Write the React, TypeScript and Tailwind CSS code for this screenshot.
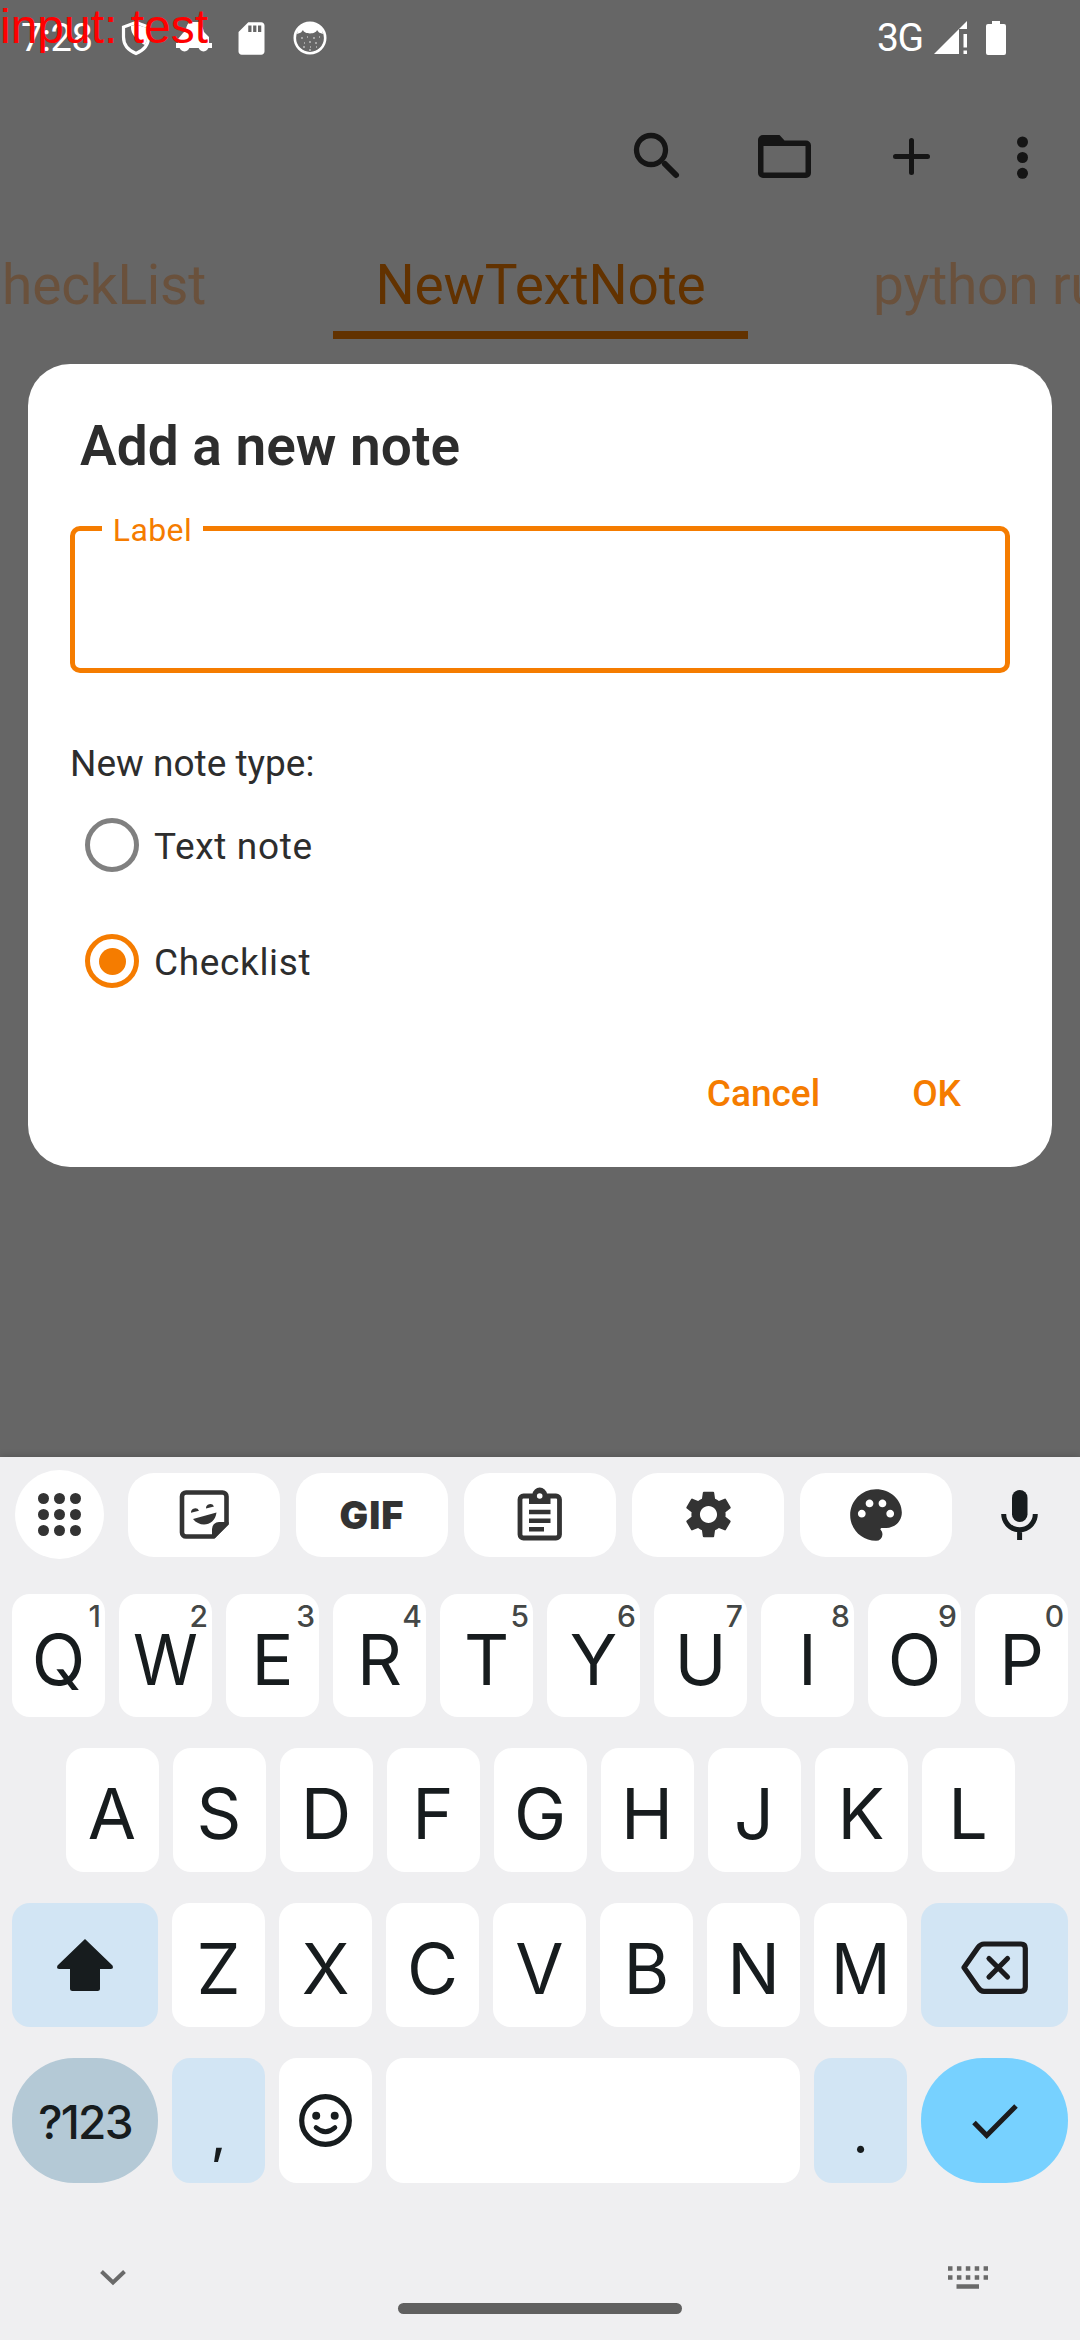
import React from "react";
import { MdPalette, MdSdCard, MdSettings } from "react-icons/md";

const INK = "#171c1e";
const DARK = "#333333";

type ArtProps = { box: [number, number, number, number]; children: React.ReactNode; className?: string };

function Art({ box, children, className }: ArtProps) {
  return (
    <svg width={box[2]} height={box[3]} viewBox={box.join(" ")} fill="none" className={className ?? "shrink-0"}>
      {children}
    </svg>
  );
}

function StatusBar() {
  return (
    <div className="flex h-[76px] shrink-0 items-center pl-[21px] text-white">
      <span className="w-[99px] text-[38px] leading-[76px] tracking-[-0.5px]">7:28</span>
      <Art box={[120, 20, 34, 38]}>
        <path d="M136 23.500L148.500 28V38C148.500 45.500 143.500 51.500 136 54.500C128.500 51.500 123.500 45.500 123.500 38V28Z" stroke="white" strokeWidth="3.200" />
        <path d="M131 27L136 25.500L147 29V38C147 42 146 44 144.500 46C139 42 130 36 131 27Z" fill="white" />
      </Art>
      <Art box={[174, 20, 40, 38]} className="ml-[20px] shrink-0">
        <path d="M186 31C186 27 188 25 189 23H199C202 26 203 29 204 33L209 38V44H212V49H176V44H178V40L183 34Z" fill="white" />
        <circle cx="184.500" cy="47.500" r="5" fill="white" />
        <circle cx="203.500" cy="47.500" r="5" fill="white" />
      </Art>
      <MdSdCard className="ml-[18px] size-[39px] shrink-0" />
      <Art box={[292, 20, 36, 36]} className="ml-[21px] shrink-0">
        <circle cx="310" cy="38" r="15.200" stroke="white" strokeWidth="2.600" />
        <path d="M297 34C298 26 304 23 310 23S322 26 323 34L319 32.500L317 30C316 34.500 304 34.500 303 30L301 32.500Z" fill="white" />
        <path d="M301 38h2M307 37h1M313 38h2M319 37h1M304 43h1M309 42h2M315 43h2M303 47h2M310 47h1M316 47h1M309 50h2" stroke="#bbb" strokeWidth="1.300" />
      </Art>
      <span className="ml-[549px] w-[57px] text-[39px] leading-[76px] tracking-[-1.500px]">3G</span>
      <Art box={[934, 19, 34, 36]}>
        <path d="M934 53L967 20V28H959V53Z" fill="white" />
        <path d="M963.500 33H967V46.500H963.500ZM963.500 49.500H967V53H963.500Z" fill="white" />
      </Art>
      <Art box={[986, 19, 20, 36]} className="ml-[18px] shrink-0">
        <path d="M992 20h8v3h4a2 2 0 0 1 2 2v27a2 2 0 0 1-2 2h-16a2 2 0 0 1-2-2v-27a2 2 0 0 1 2-2h4z" fill="white" />
      </Art>
    </div>
  );
}

function AppBar() {
  return (
    <div className="flex h-[160px] shrink-0 items-center pl-[632px]">
      <Art box={[632, 131, 50, 50]}>
        <circle cx="651" cy="150" r="14.500" stroke="#151515" strokeWidth="5.300" />
        <path d="M665 164L676 175" stroke="#151515" strokeWidth="6" strokeLinecap="round" />
      </Art>
      <Art box={[756, 131, 58, 50]} className="ml-[74px] shrink-0">
        <path d="M763 135h16.500l5 5.500H806a5 5 0 0 1 5 5V173a5 5 0 0 1-5 5H763a5 5 0 0 1-5-5V140a5 5 0 0 1 5-5zM763.500 146V172.500H805.500V146z" fill="#151515" fillRule="evenodd" />
      </Art>
      <Art box={[890, 131, 44, 50]} className="ml-[76px] shrink-0">
        <path d="M911.500 140.500V172.500M895.500 156.500H927.500" stroke="#151515" strokeWidth="5" strokeLinecap="round" />
      </Art>
      <Art box={[1014, 131, 18, 50]} className="ml-[80px] shrink-0">
        <g fill="#151515">
          <circle cx="1022.500" cy="142" r="5.500" />
          <circle cx="1022.500" cy="157.500" r="5.500" />
          <circle cx="1022.500" cy="173.300" r="5.500" />
        </g>
      </Art>
    </div>
  );
}

function Tabs() {
  return (
    <div className="flex h-[103px] shrink-0 overflow-hidden text-[55px] leading-[99px] tracking-[-0.2px] whitespace-nowrap">
      <div className="flex w-[333px] shrink-0 justify-end pr-[127px] text-[#6a513c]">CheckList</div>
      <div className="h-[103px] w-[415px] shrink-0 border-b-8 border-[#623200] text-center text-[#623200]">NewTextNote</div>
      <div className="shrink-0 pl-[125px] text-[#6a513c]">python run</div>
    </div>
  );
}

function Radio({ label, checked }: { label: string; checked?: boolean }) {
  return (
    <div className="flex h-[116px] items-center pl-[15px]">
      <div
        className={
          checked
            ? "flex size-[54px] items-center justify-center rounded-full border-[5px] border-[#f57c00]"
            : "size-[54px] rounded-full border-[5px] border-[#808080]"
        }
      >
        {checked && <div className="size-[27px] rounded-full bg-[#f57c00]" />}
      </div>
      <span className="pt-[3px] pl-[15px] text-[37px] tracking-[0.650px]">{label}</span>
    </div>
  );
}

function NoteDialog() {
  return (
    <div className="mx-7 mt-[25px] h-[803px] shrink-0 rounded-[42px] bg-white px-[42px] text-[#2d2d2d]">
      <h2 className="pt-[49px] pl-[10px] text-[55px] leading-[66px] font-semibold">Add a new note</h2>
      <div className="relative mt-[47px] h-[147px] rounded-[10px] border-[5px] border-[#f57c00]">
        <span className="absolute top-[-21px] left-[27px] w-[101px] bg-white text-center text-[32px] leading-[40px] tracking-[0.400px] text-[#f57c00]">
          Label
        </span>
      </div>
      <p className="mt-[67px] text-[37px] leading-[48px]">New note type:</p>
      <div className="-mt-px">
        <Radio label="Text note" />
        <Radio label="Checklist" checked />
      </div>
      <div className="mt-[45px] flex justify-end gap-[92px] pr-[49px] text-[37px] leading-[60px] font-medium text-[#f57c00]">
        <span>Cancel</span>
        <span>OK</span>
      </div>
    </div>
  );
}

function Pill({ children }: { children: React.ReactNode }) {
  return <div className="flex h-[84px] w-[152px] items-center justify-center rounded-[26px] bg-white text-[#333333]">{children}</div>;
}

function Toolbar() {
  return (
    <div className="flex h-[115px] items-center pl-[15px]">
      <div className="flex size-[89px] items-center justify-center rounded-full bg-white">
        <div className="grid grid-cols-3 gap-[5px]">
          {Array.from({ length: 9 }, (_, i) => (
            <div key={i} className="size-[10.700px] rounded-full bg-[#333333]" />
          ))}
        </div>
      </div>
      <div className="ml-6 flex gap-4">
        <Pill>
          <Art box={[178, 1489, 51, 51]}>
            <path d="M185 1492.500H221.500a4 4 0 0 1 4 4V1523.500L212.500 1536.500H185a4 4 0 0 1-4-4V1496.500a4 4 0 0 1 4-4z" stroke={DARK} strokeWidth="4.600" />
            <path d="M211 1538V1529a7 7 0 0 1 7-7H227.500V1524L214 1538z" fill={DARK} />
            <path d="M192 1519L215.500 1512.500C214 1526 199 1528 192 1519zM190 1512.800a4.200 4.200 0 0 1 8-2zM205 1508.500a4.200 4.200 0 0 1 8-2z" fill={DARK} />
          </Art>
        </Pill>
        <Pill>
          <span className="text-[38px] leading-none font-black tracking-[1px]">GIF</span>
        </Pill>
        <Pill>
          <Art box={[515, 1487, 50, 55]}>
            <rect x="520" y="1496" width="39.500" height="42" rx="3.500" stroke={DARK} strokeWidth="4.800" />
            <path d="M529 1504V1494H532.500a7.300 7.300 0 0 1 14.500 0H550.500V1504z" fill={DARK} />
            <circle cx="539.700" cy="1496" r="2.800" fill="white" />
            <path d="M529 1512H550.500M529 1520.700H550.500M529 1529.200H544" stroke={DARK} strokeWidth="4.400" />
          </Art>
        </Pill>
        <Pill>
          <MdSettings className="size-[57px]" />
        </Pill>
        <Pill>
          <MdPalette className="size-[62px]" />
        </Pill>
      </div>
      <Art box={[999, 1486, 41, 56]} className="ml-[47px] shrink-0">
        <rect x="1012" y="1489" width="15.500" height="32" rx="7.750" fill={INK} />
        <path d="M1003.700 1513a15.800 15.800 0 0 0 31.600 0M1019.600 1529V1539" stroke={INK} strokeWidth="5" />
      </Art>
    </div>
  );
}

function Key({ letter, hint }: { letter: string; hint?: string }) {
  return (
    <div className="relative flex h-full w-[93px] shrink-0 items-center justify-center rounded-[18px] bg-white pt-2 text-[70px] leading-none">
      <span className={letter === "W" || letter === "M" ? "scale-x-[0.94]" : ""}>{letter}</span>
      {hint && (
        <span className="absolute top-[6px] right-[5px] text-[30px] leading-[32px] font-medium tracking-[-1px] text-[#444746]">{hint}</span>
      )}
    </div>
  );
}

function Keyboard() {
  return (
    <div
      className="flex h-[883px] shrink-0 flex-col bg-[#efeff1] text-[#171c1e] shadow-[0_0_8px_rgba(0,0,0,0.2)]"
      style={{ fontFamily: "Inter, sans-serif" }}
    >
      <Toolbar />
      <div className="mt-[22px] flex h-[123px] gap-[14px] pl-3">
        {"QWERTYUIOP".split("").map((c, i) => (
          <Key key={c} letter={c} hint={String((i + 1) % 10)} />
        ))}
      </div>
      <div className="mt-[31px] flex h-[124px] justify-center gap-[14px]">
        {"ASDFGHJKL".split("").map((c) => (
          <Key key={c} letter={c} />
        ))}
      </div>
      <div className="mt-[31px] flex h-[124px] gap-[14px] pl-3">
        <div className="flex w-[146px] items-center justify-center rounded-[18px] bg-[#d2e5f4]">
          <Art box={[56, 1938, 58, 54]}>
            <path d="M85 1939L112.500 1965.500Q114 1969 110.500 1969H100V1988.500Q100 1991 97.500 1991H72.500Q70 1991 70 1988.500V1969H59.500Q56 1969 57.500 1965.500Z" fill={INK} />
          </Art>
        </div>
        {"ZXCVBNM".split("").map((c) => (
          <Key key={c} letter={c} />
        ))}
        <div className="flex w-[147px] items-center justify-center rounded-[18px] bg-[#d2e5f4] pt-[5px]">
          <Art box={[959, 1939, 70, 57]}>
            <path d="M963 1967.500L977 1947.500Q979.500 1944 983 1944H1020Q1024.300 1944 1024.300 1948.300V1987Q1024.300 1991.300 1020 1991.300H983Q979.500 1991.300 977 1987.500Z" stroke="#1b1b1d" strokeWidth="5.200" strokeLinejoin="round" />
            <path d="M988 1958.500L1006.500 1977M1006.500 1958.500L988 1977" stroke="#1b1b1d" strokeWidth="5.200" strokeLinecap="round" />
          </Art>
        </div>
      </div>
      <div className="mt-[31px] flex h-[125px] gap-[14px] pl-3">
        <div className="flex w-[146px] items-center justify-center rounded-[62px] bg-[#b4c9d6] pt-[3px] text-[46px] font-medium tracking-[-1.700px]">?123</div>
        <div className="flex w-[93px] items-end justify-center rounded-[18px] bg-[#d2e5f4] pb-[18px] text-[50px] leading-[60px] font-medium">,</div>
        <div className="flex w-[93px] items-center justify-center rounded-[18px] bg-white">
          <Art box={[298, 2093, 55, 55]}>
            <circle cx="325.500" cy="2120.500" r="23.800" stroke={INK} strokeWidth="5.200" />
            <circle cx="316.200" cy="2115.700" r="4" fill={INK} />
            <circle cx="334.700" cy="2115.700" r="4" fill={INK} />
            <path d="M316 2127.500Q325.500 2136 335 2127.500" stroke={INK} strokeWidth="4.600" strokeLinecap="round" />
          </Art>
        </div>
        <div className="w-[414px] rounded-[18px] bg-white" />
        <div className="flex w-[93px] items-end justify-center rounded-[18px] bg-[#d2e5f4] pb-[18px] text-[50px] leading-[60px] font-medium">.</div>
        <div className="flex w-[147px] items-center justify-center rounded-[62px] bg-[#77d1ff]">
          <Art box={[970, 2101, 50, 40]}>
            <path d="M974 2122.500L986.700 2135.500L1016 2106" stroke="#1b1b1d" strokeWidth="5" />
          </Art>
        </div>
      </div>
      <div className="mt-[80px] flex h-[28px] items-center justify-between pr-[92px] pl-[99px]">
        <Art box={[99, 2263, 28, 28]}>
          <path d="M101.500 2271.500L113 2282.500L124.500 2271.500" stroke="#6a6a6a" strokeWidth="4" />
        </Art>
        <Art box={[947, 2263, 41, 28]}>
          <path d="M948 2268.500h41M948 2277.500h41" stroke="#6a6a6a" strokeWidth="4.500" strokeDasharray="4.500 4.400" />
          <path d="M956.500 2286.500H979" stroke="#6a6a6a" strokeWidth="4.500" />
        </Art>
      </div>
      <div className="mt-[12px] h-[11px] w-[284px] self-center rounded-full bg-[#606060]" />
    </div>
  );
}

export default function App() {
  return (
    <div className="relative flex h-[2340px] w-[1080px] flex-col overflow-hidden bg-[#666666]" style={{ fontFamily: "Roboto, sans-serif" }}>
      <StatusBar />
      <AppBar />
      <Tabs />
      <NoteDialog />
      <div className="h-[290px] shrink-0" />
      <Keyboard />
      <div
        className="absolute top-0 left-0 text-[48px] leading-[54px] whitespace-pre text-[#ff0000]"
        style={{ fontFamily: '"Liberation Sans", sans-serif' }}
      >
        input: test
      </div>
    </div>
  );
}
